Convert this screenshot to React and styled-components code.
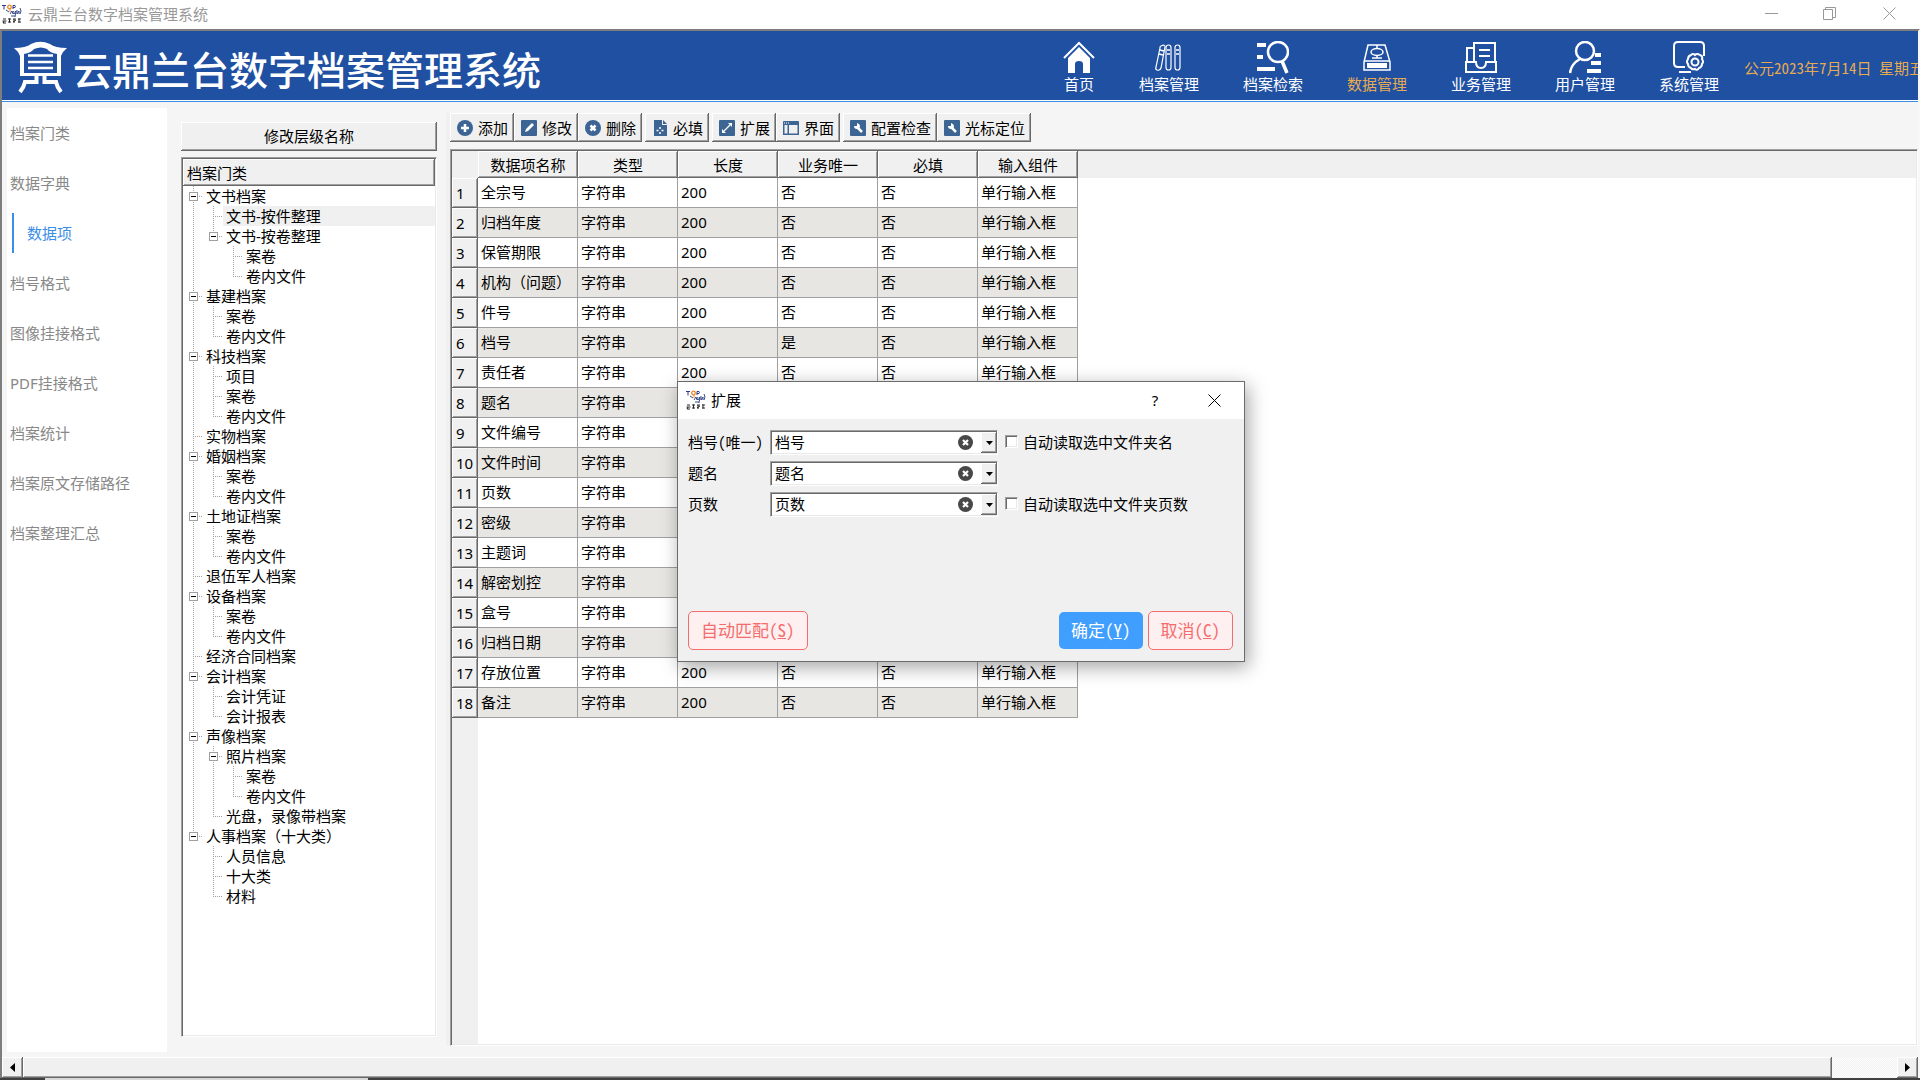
import React from "react";
import styled, { createGlobalStyle, css } from "styled-components";

const GlobalStyle = createGlobalStyle`
  * { box-sizing: border-box; }
  body {
    margin: 0;
    font: 15px/20px "Noto Sans", "Noto Sans CJK SC", sans-serif;
    color: #000;
    background: #f5f5f5;
  }
  button, select, input { font: inherit; color: inherit; margin: 0; }
`;

const songti = css`
  font-family: "Noto Sans CJK SC", sans-serif;
  font-feature-settings: "hwid";
`;

const raised = css`
  background: #f0f0f0;
  border: 0;
  box-shadow: inset -1px -1px #696969, inset 1px 1px #fff, inset -2px -2px #a0a0a0;
`;

const sunken = css`
  border: 1px solid;
  border-color: #a0a0a0 #fff #fff #a0a0a0;
  box-shadow: inset 1px 1px #696969, inset -1px -1px #e9e9e9;
`;

/* ---------- window ---------- */

const Window = styled.div`
  display: flex;
  flex-direction: column;
  min-height: 100vh;
  overflow: hidden;
`;

const TitleBar = styled.div`
  display: flex;
  align-items: center;
  height: 29px;
  padding: 0 0 2px 2px;
  gap: 6px;
  background: #fff;
  color: #999;
`;

const TitleText = styled.span`
  flex: 1;
`;

const Controls = styled.div`
  display: flex;
  height: 100%;
`;

const CaptionButton = styled.button`
  display: grid;
  place-items: center;
  width: ${(p) => p.$width || 58}px;
  height: 100%;
  padding: 0;
  border: 0;
  background: transparent;
  color: inherit;
`;

const Frame = styled.div`
  flex: 1;
  display: flex;
  flex-direction: column;
  min-width: 0;
  border: 2px solid;
  border-color: #7d7d7d #f8f8f8 #7d7d7d #7d7d7d;
  border-bottom-width: 0;
`;

const Header = styled.header`
  display: flex;
  align-items: center;
  height: 71px;
  overflow: hidden;
  padding: 3px 0 0 12px;
  background: #1f50a2;
  border-bottom: 1px solid #3a8ee6;
  box-shadow: inset 0 -1px #fff;
  color: #fff;
`;

const Brand = styled.h1`
  display: flex;
  align-items: center;
  gap: 6px;
  flex: 1;
  margin: 0;
  font: 500 39px/56px "Noto Sans CJK SC", sans-serif;
  white-space: nowrap;
`;

const Nav = styled.nav`
  display: flex;
`;

const NavLink = styled.a`
  display: flex;
  flex-direction: column;
  align-items: center;
  padding: 0 22px;
  color: ${(p) => (p.$active ? "#e6ab52" : "#fff")};
  text-decoration: none;
  white-space: nowrap;

  svg { color: #fff; }
`;

const DateText = styled.time`
  ${songti}
  width: 177px;
  padding-left: 3px;
  overflow: hidden;
  white-space: nowrap;
  color: #e6ab52;
`;

const Body = styled.div`
  flex: 1;
  display: flex;
  align-items: stretch;
`;

const Sidebar = styled.nav`
  width: 160px;
  flex: none;
  margin: 6px 14px 5px 5px;
  background: #fff;
`;

const SideItem = styled.a`
  display: flex;
  align-items: center;
  height: 50px;
  padding-left: ${(p) => (p.$active ? 5 : 3)}px;
  color: ${(p) => (p.$active ? "#3a8ee6" : "#888")};
  text-decoration: none;

  ${(p) =>
    p.$active &&
    css`
      &::before {
        content: "";
        width: 2px;
        height: 40px;
        margin-right: 13px;
        background: #3a8ee6;
      }
    `}
`;

/* ---------- category tree ---------- */

const TreeColumn = styled.section`
  display: flex;
  flex-direction: column;
  gap: 6px;
  width: 256px;
  flex: none;
  margin: 20px 9px 20px 0;
`;

const WideButton = styled.button`
  ${raised}
  ${songti}
  height: 29px;
  padding: 0 0 2px;
`;

const TreeBox = styled.div`
  ${sunken}
  flex: 1;
  padding: 1px;
  background: #fff;
`;

const TreeHead = styled.div`
  ${raised}
  height: 27px;
  padding: 4px 4px 0;
`;

const TreeRow = styled.div`
  display: flex;
  height: 20px;
`;

const dotsDown = "repeating-linear-gradient(to bottom, #a0a0a0 0 1px, transparent 1px 2px)";
const dotsAcross = "repeating-linear-gradient(to right, #a0a0a0 0 1px, transparent 1px 2px)";

const Guide = styled.span`
  flex: none;
  width: 20px;
  height: 20px;
  background: ${(p) =>
    [
      p.$vertical && `${dotsDown} 10px 0 / 1px ${p.$vertical}px no-repeat`,
      p.$across && `${dotsAcross} 10px 10px / 10px 1px no-repeat`,
    ]
      .filter(Boolean)
      .join(", ") || "none"};
`;

const Toggle = styled.button`
  display: block;
  width: 9px;
  height: 9px;
  margin: 6px 0 0 6px;
  padding: 0;
  border: 1px solid #a0a0a0;
  background: linear-gradient(#000, #000) 1px 3px / 5px 1px no-repeat #fff;
`;

const TreeLabel = styled.span`
  flex: 1;
  padding-left: 3px;
  white-space: nowrap;
  background: ${(p) => (p.$selected ? "#f0f0f0" : "transparent")};
`;

/* ---------- main panel ---------- */

const Main = styled.main`
  flex: 1;
  min-width: 0;
  display: flex;
  flex-direction: column;
  gap: 7px;
  margin: 11px 0;
  border-left: 4px solid #f0f0f0;
`;

const Toolbar = styled.div`
  display: flex;
`;

const ToolGroup = styled.div`
  display: flex;
  margin-right: 3px;
`;

const ToolButton = styled.button`
  ${raised}
  ${songti}
  display: flex;
  align-items: center;
  gap: 5px;
  height: 29px;
  padding: 0 6px 0 7px;
  white-space: nowrap;
`;

const TableFrame = styled.div`
  ${sunken}
  flex: 1;
  padding: 1px;
  background:
    linear-gradient(#f0f0f0, #f0f0f0) 1px 1px / 100% 27px no-repeat,
    linear-gradient(#f0f0f0, #f0f0f0) 1px 1px / 26px 100% no-repeat,
    #fff;
`;

const Table = styled.table`
  width: 626px;
  table-layout: fixed;
  border-collapse: separate;
  border-spacing: 0;
`;

const ColHead = styled.th`
  ${raised}
  width: 100px;
  height: 27px;
  padding: 1px 0 0;
  font-weight: 400;
`;

const Corner = styled.td`
  width: 26px;
  padding: 0;
`;

const RowHead = styled.th`
  ${raised}
  height: 30px;
  padding: 0 0 1px 4px;
  font-weight: 400;
  text-align: left;
`;

const Row = styled.tr`
  background: #fff;
  &:nth-child(even) { background: #e8e6e2; }
`;

const Cell = styled.td`
  height: 30px;
  padding: 0 3px 2px;
  border-right: 1px solid #a0a0a0;
  border-bottom: 1px solid #a0a0a0;
  white-space: nowrap;
`;

/* ---------- horizontal scroll bar ---------- */

const ScrollBar = styled.div`
  display: flex;
  height: 21px;
  background: repeating-conic-gradient(#fff 0 25%, #f0f0f0 0 50%) 0 0 / 2px 2px;
`;

const ScrollButton = styled.button`
  ${raised}
  display: grid;
  place-items: center;
  width: 21px;
  padding: 0;
`;

const ScrollThumb = styled.div`
  ${raised}
  flex: 1;
  margin-right: 65px;
`;

const Taskbar = styled.div`
  height: 2px;
  padding-left: 45px;
  background: #404040;

  &::before {
    content: "";
    display: block;
    width: 323px;
    height: 2px;
    background: #d8d8d8;
  }
`;

/* ---------- dialog ---------- */

const Dialog = styled.section`
  position: absolute;
  left: 677px;
  top: 381px;
  width: 568px;
  height: 281px;
  display: flex;
  flex-direction: column;
  border: 1px solid #6b6b6b;
  background: #f0f0f0;
  box-shadow: 3px 5px 18px rgba(0, 0, 0, 0.36);
`;

const DialogTitle = styled.header`
  display: flex;
  align-items: center;
  gap: 5px;
  height: 37px;
  padding: 0 0 1px 8px;
  background: #fff;
`;

const DialogForm = styled.form`
  ${songti}
  flex: 1;
  display: flex;
  flex-direction: column;
  justify-content: space-between;
  padding: 11px;
  padding-left: 10px;
`;

const Fields = styled.div`
  display: grid;
  grid-template-columns: 82px 228px auto;
  grid-auto-rows: 25px;
  row-gap: 6px;
  align-items: center;
`;

const FieldLabel = styled.label`
  padding-bottom: 2px;
`;

const Combo = styled.div`
  ${sunken}
  position: relative;
  height: 25px;
  background: #fff;
`;

const ComboSelect = styled.select`
  appearance: none;
  display: block;
  width: 100%;
  height: 100%;
  padding: 0 0 2px 4px;
  border: 0;
  background: transparent;
`;

const ComboClear = styled.button`
  position: absolute;
  right: 24px;
  top: 4px;
  display: block;
  width: 15px;
  height: 15px;
  padding: 0;
  border: 0;
  background: none;
  svg { display: block; }
`;

const ComboArrow = styled.span`
  ${raised}
  position: absolute;
  right: 0;
  top: 1px;
  bottom: 1px;
  width: 16px;
  display: grid;
  place-items: center;
  pointer-events: none;
`;

const Check = styled.label`
  display: flex;
  align-items: center;
  gap: 5px;
  padding: 0 0 2px 7px;
`;

const CheckInput = styled.input`
  ${sunken}
  appearance: none;
  width: 13px;
  height: 13px;
  background: #fff;
`;

const Actions = styled.div`
  display: flex;
  align-items: center;
  gap: 5px;
`;

const ActionButton = styled.button`
  height: ${(p) => (p.$primary ? 37 : 39)}px;
  padding: 0 12px 2px;
  margin-right: ${(p) => (p.$push ? "auto" : "0")};
  border: ${(p) => (p.$primary ? "0" : "1px solid #f56c6c")};
  border-radius: 5px;
  background: ${(p) => (p.$primary ? "#409eff" : "#fef0f0")};
  color: ${(p) => (p.$primary ? "#fff" : "#f56c6c")};
  font-size: 17px;
  white-space: nowrap;
`;

/* ---------- drawings ---------- */

const AppIcon = () => (
  <svg width="20" height="20" viewBox="0 0 20 20" fill="none" aria-hidden="true">
    <path d="M0 1.500h4M2 1.500v4M11 5V1.500h2q1 1 0 2h-2" stroke="#2b3a8c" />
    <circle cx="7.500" cy="3" r="1.800" stroke="#ef8a1d" strokeWidth="1.300" />
    <path d="M8 5v3" stroke="#ef8a1d" />
    <path d="M4 6l3 2M8 10l2-3 1 3M12 7q-2 2 0 3l2-3-1 6M15 6v4l2-3v3M18 4q2 3 0 6M9 12h4" stroke="#27397f" strokeWidth="0.900" />
    <path d="M1 15h3M0.500 17h4M2 17l-1 2h3M6 15h3M6 18h3M7.500 14.500v4M11 15h3M11 18l3-2M12 15v4M16 15h3M16 18h3M17 14.500v4" stroke="#111" strokeWidth="0.900" />
  </svg>
);

const BrandLogo = () => (
  <svg width="53" height="53" viewBox="0 0 53 53" fill="none" stroke="#fff" aria-hidden="true">
    <path
      d="M0 7Q12 7 17 3q9-4.500 19 0 5 4 17 4-4 3-6 8v20H6V15Q4 10 0 7zM10 13v19h33V13Q36 12 33 8q-6-3-13 0-3 4-10 5z"
      fill="#fff"
      fillRule="evenodd"
      stroke="none"
    />
    <path d="M14 14.500h25M14 21h25M14 27h25" strokeWidth="2.500" />
    <path d="M22.500 33v8H11q-1 5-5 10M30.500 33v8H42q1 5 5 10" strokeWidth="4" />
  </svg>
);

const navIcons = {
  home: (
    <>
      <path d="M1 17L16 2l15 15" strokeWidth="2" />
      <path d="M5 17L16 6l11 11v15h-7V23q0-3-4-3t-4 3v9H5z" fill="currentColor" stroke="none" />
    </>
  ),
  books: (
    <g strokeWidth="1.200">
      <path d="M8 5q4-2 4 1L8 27q-1 3-4 2-2-1-1-3L7 7q0-2 1-2z" />
      <rect x="13" y="4" width="5" height="25" rx="2.500" />
      <rect x="22" y="4" width="5" height="25" rx="2.500" />
      <path d="M7 9l4 1M6 13l4 1M14 9h3M14 13h3M23 9h3M23 13h3" strokeWidth="1.500" />
    </g>
  ),
  search: (
    <>
      <circle cx="21" cy="11" r="10" strokeWidth="2.500" />
      <path d="M25 20l5 12" strokeWidth="3.500" />
      <path d="M0 4h9M0 16h6M0 28h18" strokeWidth="4" />
    </>
  ),
  data: (
    <g strokeWidth="1.500">
      <path d="M7 4h17l5 17v8H3v-8z" />
      <path d="M3 20h26M16 4v4M16 14v3M11 17h10" />
      <ellipse cx="16" cy="11" rx="6" ry="3.500" />
      <rect x="6" y="22" width="20" height="5" fill="currentColor" stroke="none" />
    </g>
  ),
  inbox: (
    <g strokeWidth="2">
      <path d="M9 21V2h21v19M9 7H2v14" />
      <path d="M1 21h10q0 6 5 6t5-6h10v10H1z" />
      <path d="M14 9h11M14 15h11" />
    </g>
  ),
  user: (
    <>
      <circle cx="16" cy="10" r="9" strokeWidth="2.500" />
      <path d="M11 18Q2 23 1 32" strokeWidth="2.500" />
      <path d="M26 14h6M22 22h10M18 30h14" strokeWidth="4" />
    </>
  ),
  system: (
    <>
      <path d="M31 15V5q0-4-4-4H5Q1 1 1 5v17q0 4 4 4h7M6 31h12" strokeWidth="2" />
      <path
        d="M18 14q2-2 4 0 2-2 5 0 3 1 2 4 2 3 0 5 0 3-3 4-2 3-4 1-3 1-4-1-3-1-3-4-2-2 0-5 0-3 3-4z"
        strokeWidth="2"
      />
      <circle cx="22" cy="21" r="3.500" strokeWidth="2" />
    </>
  ),
};

const NavIcon = ({ name }) => (
  <svg width="32" height="33" viewBox="0 0 32 33" fill="none" stroke="currentColor" aria-hidden="true">
    {navIcons[name]}
  </svg>
);

const toolIcons = {
  add: (
    <>
      <circle cx="8" cy="8" r="8" />
      <path d="M8 4v8M4 8h8" stroke="#fff" strokeWidth="2.500" />
    </>
  ),
  edit: (
    <>
      <rect width="16" height="16" rx="1" />
      <path d="M4 12l1-3 6-6 2 2-6 6z" fill="#fff" />
    </>
  ),
  remove: (
    <>
      <circle cx="8" cy="8" r="8" />
      <path d="M5.500 5.500l5 5M10.500 5.500l-5 5" stroke="#fff" strokeWidth="2.500" />
    </>
  ),
  required: (
    <>
      <path d="M2 0h8v5h5v11H2zM11 0l4 4h-4z" />
      <path d="M8 7v2M8 12v2M4.500 10.500h2M9.500 10.500h2" stroke="#fff" strokeWidth="1.500" />
    </>
  ),
  expand: (
    <>
      <rect width="16" height="16" rx="1" />
      <path d="M5 11l6-6" stroke="#fff" strokeWidth="1.200" />
      <path d="M9 3h4v4zM3 9v4h4z" fill="#fff" />
    </>
  ),
  layout: (
    <>
      <path d="M0 2q0-1 1-1h14q1 0 1 1v13H0zM1.500 5v8.500h3V5zM6 5v8.500h8.500V5z" fillRule="evenodd" />
      <path d="M1 3h1M3 3h1M5 3h1" stroke="#fff" />
    </>
  ),
  wrench: (
    <>
      <rect width="16" height="16" rx="1" />
      <path d="M7 7l5 5" stroke="#fff" strokeWidth="2.500" />
      <path d="M4 6q0 3 3 3 3 0 3-3 0-2-3-3v3H5z" fill="#fff" />
    </>
  ),
};

const ToolIcon = ({ name }) => (
  <svg width="16" height="16" viewBox="0 0 16 16" fill="#3c6594" aria-hidden="true">
    {toolIcons[name]}
  </svg>
);

const CloseGlyph = () => (
  <svg width="13" height="13" viewBox="0 0 13 13" stroke="currentColor" aria-hidden="true">
    <path d="M0.500 0.500l12 12M12.500 0.500l-12 12" />
  </svg>
);

/* ---------- data ---------- */

const navItems = [
  ["home", "首页"],
  ["books", "档案管理"],
  ["search", "档案检索"],
  ["data", "数据管理"],
  ["inbox", "业务管理"],
  ["user", "用户管理"],
  ["system", "系统管理"],
];

const sideItems = [
  "档案门类", "数据字典", "数据项", "档号格式", "图像挂接格式",
  "PDF挂接格式", "档案统计", "档案原文存储路径", "档案整理汇总",
];

const volume = [["案卷"], ["卷内文件"]];

const tree = [
  ["文书档案", [["文书-按件整理"], ["文书-按卷整理", volume]]],
  ["基建档案", volume],
  ["科技档案", [["项目"], ...volume]],
  ["实物档案"],
  ["婚姻档案", volume],
  ["土地证档案", volume],
  ["退伍军人档案"],
  ["设备档案", volume],
  ["经济合同档案"],
  ["会计档案", [["会计凭证"], ["会计报表"]]],
  ["声像档案", [["照片档案", volume], ["光盘，录像带档案"]]],
  ["人事档案（十大类）", [["人员信息"], ["十大类"], ["材料"]]],
];

const toolGroups = [
  [["add", "添加"], ["edit", "修改"], ["remove", "删除"]],
  [["required", "必填"]],
  [["expand", "扩展"], ["layout", "界面"]],
  [["wrench", "配置检查"], ["wrench", "光标定位"]],
];

const columns = ["数据项名称", "类型", "长度", "业务唯一", "必填", "输入组件"];

const fields = [
  "全宗号", "归档年度", "保管期限", "机构（问题）", "件号", "档号", "责任者", "题名", "文件编号",
  "文件时间", "页数", "密级", "主题词", "解密划控", "盒号", "归档日期", "存放位置", "备注",
];

const dialogFields = [
  { id: "no", label: "档号(唯一)", value: "档号", check: "自动读取选中文件夹名" },
  { id: "title", label: "题名", value: "题名" },
  { id: "pages", label: "页数", value: "页数", check: "自动读取选中文件夹页数" },
];

function TreeNodes({ nodes, trail = [] }) {
  return nodes.map(([label, children], i) => {
    const last = i === nodes.length - 1;
    return (
      <React.Fragment key={label}>
        <TreeRow>
          {trail.map((open, k) => (
            <Guide key={k} $vertical={open ? 20 : 0} />
          ))}
          <Guide $vertical={last ? 10 : 20} $across>
            {children && <Toggle type="button" aria-label={`折叠 ${label}`} />}
          </Guide>
          <TreeLabel $selected={label === "文书-按件整理"}>{label}</TreeLabel>
        </TreeRow>
        {children && <TreeNodes nodes={children} trail={[...trail, !last]} />}
      </React.Fragment>
    );
  });
}

function FieldRow({ id, label, value, check }) {
  return (
    <>
      <FieldLabel htmlFor={id}>{label}</FieldLabel>
      <Combo>
        <ComboSelect id={id} defaultValue={value}>
          {dialogFields.map((f) => (
            <option key={f.id}>{f.value}</option>
          ))}
        </ComboSelect>
        <ComboClear type="button" aria-label="清除">
          <svg width="15" height="15" viewBox="0 0 15 15">
            <circle cx="7.500" cy="7.500" r="7.500" fill="#484848" />
            <path d="M5 5l5 5M10 5l-5 5" stroke="#fff" strokeWidth="2.200" />
          </svg>
        </ComboClear>
        <ComboArrow>
          <svg width="7" height="4" viewBox="0 0 7 4">
            <path d="M0 0h7L3.500 4z" />
          </svg>
        </ComboArrow>
      </Combo>
      {check ? (
        <Check>
          <CheckInput type="checkbox" />
          {check}
        </Check>
      ) : (
        <span />
      )}
    </>
  );
}

export default function App() {
  return (
    <>
      <GlobalStyle />
      <Window>
        <TitleBar>
          <AppIcon />
          <TitleText>云鼎兰台数字档案管理系统</TitleText>
          <Controls>
            <CaptionButton aria-label="最小化">
              <svg width="13" height="13" stroke="currentColor"><path d="M0 6.500h13" /></svg>
            </CaptionButton>
            <CaptionButton aria-label="还原">
              <svg width="13" height="13" fill="none" stroke="currentColor">
                <path d="M0.500 2.500h9v10h-9zM2.500 2.500v-2h10v10h-3" />
              </svg>
            </CaptionButton>
            <CaptionButton $width={62} aria-label="关闭"><CloseGlyph /></CaptionButton>
          </Controls>
        </TitleBar>

        <Frame>
          <Header>
            <Brand>
              <BrandLogo />
              云鼎兰台数字档案管理系统
            </Brand>
            <Nav>
              {navItems.map(([icon, text]) => (
                <NavLink key={icon} href="#" $active={icon === "data"}>
                  <NavIcon name={icon} />
                  {text}
                </NavLink>
              ))}
            </Nav>
            <DateText dateTime="2023-07-14">公元2023年7月14日 星期五</DateText>
          </Header>

          <Body>
            <Sidebar>
              {sideItems.map((text) => (
                <SideItem key={text} href="#" $active={text === "数据项"}>{text}</SideItem>
              ))}
            </Sidebar>

            <TreeColumn>
              <WideButton type="button">修改层级名称</WideButton>
              <TreeBox>
                <TreeHead>档案门类</TreeHead>
                <TreeNodes nodes={tree} />
              </TreeBox>
            </TreeColumn>

            <Main>
              <Toolbar>
                {toolGroups.map((group, i) => (
                  <ToolGroup key={i}>
                    {group.map(([icon, text]) => (
                      <ToolButton key={text} type="button">
                        <ToolIcon name={icon} />
                        {text}
                      </ToolButton>
                    ))}
                  </ToolGroup>
                ))}
              </Toolbar>
              <TableFrame>
                <Table>
                  <thead>
                    <tr>
                      <Corner />
                      {columns.map((c) => <ColHead key={c} scope="col">{c}</ColHead>)}
                    </tr>
                  </thead>
                  <tbody>
                    {fields.map((name, i) => (
                      <Row key={name}>
                        <RowHead scope="row">{i + 1}</RowHead>
                        <Cell>{name}</Cell>
                        <Cell>字符串</Cell>
                        <Cell>200</Cell>
                        <Cell>{name === "档号" ? "是" : "否"}</Cell>
                        <Cell>否</Cell>
                        <Cell>单行输入框</Cell>
                      </Row>
                    ))}
                  </tbody>
                </Table>
              </TableFrame>
            </Main>
          </Body>

          <ScrollBar>
            <ScrollButton type="button" aria-label="向左滚动">
              <svg width="5" height="9"><path d="M5 0v9L0 4.500z" /></svg>
            </ScrollButton>
            <ScrollThumb />
            <ScrollButton type="button" aria-label="向右滚动">
              <svg width="5" height="9"><path d="M0 0v9l5-4.500z" /></svg>
            </ScrollButton>
          </ScrollBar>
        </Frame>
        <Taskbar />
      </Window>

      <Dialog role="dialog" aria-label="扩展">
        <DialogTitle>
          <AppIcon />
          <TitleText>扩展</TitleText>
          <Controls>
            <CaptionButton aria-label="帮助">?</CaptionButton>
            <CaptionButton $width={60} aria-label="关闭"><CloseGlyph /></CaptionButton>
          </Controls>
        </DialogTitle>
        <DialogForm onSubmit={(e) => e.preventDefault()}>
          <Fields>
            {dialogFields.map((f) => <FieldRow key={f.id} {...f} />)}
          </Fields>
          <Actions>
            <ActionButton type="button" $push>自动匹配(<u>S</u>)</ActionButton>
            <ActionButton type="submit" $primary>确定(<u>Y</u>)</ActionButton>
            <ActionButton type="button">取消(<u>C</u>)</ActionButton>
          </Actions>
        </DialogForm>
      </Dialog>
    </>
  );
}
